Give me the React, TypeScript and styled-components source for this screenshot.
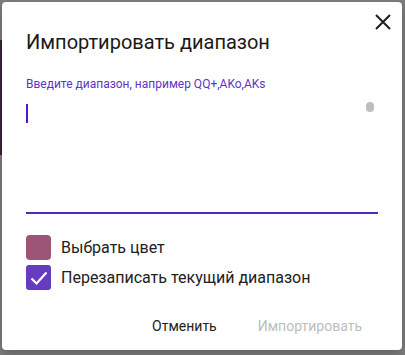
import React from 'react';
import styled, { createGlobalStyle } from 'styled-components';

const GlobalStyle = createGlobalStyle`
  html, body {
    margin: 0;
    padding: 0;
    background: #7f7f7f;
    font-family: Roboto, "Noto Sans", sans-serif;
  }
`;

type Option = {
  label: string;
  checked?: boolean;
  color?: string;
};

const options: Option[] = [
  { label: 'Выбрать цвет', color: '#9c5577' },
  { label: 'Перезаписать текущий диапазон', checked: true },
];

function App() {
  return (
    <>
      <GlobalStyle />
      <Backdrop>
        <SideStrip />
        <Dialog>
          <CloseButton aria-label="close">
            <svg width="16" height="16" viewBox="0 0 16 16">
              <path d="M1 1 L15 15 M15 1 L1 15" stroke="#1f1f1f" strokeWidth="2" />
            </svg>
          </CloseButton>
          <Title>Импортировать диапазон</Title>
          <FieldLabel>Введите диапазон, например QQ+,AKo,AKs</FieldLabel>
          <Field>
            <Caret />
            <Thumb />
          </Field>
          <Options>
            {options.map((o) => (
              <OptionRow key={o.label}>
                {o.color ? (
                  <Swatch $color={o.color} />
                ) : (
                  <CheckBox>
                    {o.checked && (
                      <svg width="20" height="20" viewBox="0 0 20 20">
                        <path
                          d="M2.5 10.5 L7.5 15.5 L17.5 4.5"
                          fill="none"
                          stroke="#fff"
                          strokeWidth="2.2"
                        />
                      </svg>
                    )}
                  </CheckBox>
                )}
                <OptionText>{o.label}</OptionText>
              </OptionRow>
            ))}
          </Options>
          <Actions>
            <TextButton>Отменить</TextButton>
            <TextButton $disabled>Импортировать</TextButton>
          </Actions>
        </Dialog>
      </Backdrop>
    </>
  );
}

export default App;

const Backdrop = styled.div`
  position: relative;
  width: 405px;
  height: 355px;
  padding: 2px 3px 0 2px;
  box-sizing: border-box;
  background: #7f7f7f;
  overflow: hidden;
`;

const SideStrip = styled.div`
  position: absolute;
  left: 0;
  top: 40px;
  width: 3px;
  height: 115px;
  background: #3c2239;
`;

const Dialog = styled.div`
  position: relative;
  width: 400px;
  height: 348px;
  box-sizing: border-box;
  background: #fff;
  border-radius: 4px;
  padding: 24px 24px 0 24px;
  display: flex;
  flex-direction: column;
  box-shadow: 0 4px 12px rgba(0, 0, 0, 0.25);
`;

const CloseButton = styled.button`
  position: absolute;
  top: 9px;
  right: 8px;
  width: 22px;
  height: 22px;
  padding: 0;
  border: none;
  background: none;
  display: flex;
  align-items: center;
  justify-content: center;
`;

const Title = styled.h2`
  margin: 0;
  font-size: 20px;
  line-height: 32px;
  font-weight: 400;
  color: #1a1a1a;
`;

const FieldLabel = styled.div`
  margin-top: 18px;
  font-size: 12px;
  line-height: 16px;
  color: #5e35c4;
`;

const Field = styled.div`
  height: 122px;
  padding: 12px 4px 0 0;
  box-sizing: border-box;
  border-bottom: 2px solid #5228b8;
  display: flex;
  justify-content: space-between;
  align-items: flex-start;
`;

const Caret = styled.div`
  width: 2px;
  height: 19px;
  background: #5015cc;
`;

const Thumb = styled.div`
  width: 8px;
  height: 10px;
  border-radius: 4px;
  background: #bdbdc4;
  margin-top: -2px;
`;

const Options = styled.div`
  margin-top: 21px;
  display: flex;
  flex-direction: column;
  gap: 5px;
`;

const OptionRow = styled.div`
  display: flex;
  align-items: center;
  gap: 10px;
  height: 25px;
`;

const Swatch = styled.div<{ $color: string }>`
  width: 25px;
  height: 25px;
  border-radius: 4px;
  background: ${(p) => p.$color};
`;

const CheckBox = styled.div`
  width: 25px;
  height: 25px;
  border-radius: 3px;
  background: #673bbf;
  display: flex;
  align-items: center;
  justify-content: center;
`;

const OptionText = styled.span`
  font-size: 16px;
  color: #222;
`;

const Actions = styled.div`
  margin-top: 18px;
  display: flex;
  justify-content: flex-end;
  gap: 9px;
`;

const TextButton = styled.button<{ $disabled?: boolean }>`
  height: 36px;
  padding: 0 16px;
  border: none;
  background: none;
  font-family: Roboto, "Noto Sans", sans-serif;
  font-size: 14px;
  color: ${(p) => (p.$disabled ? '#bdbdbd' : '#222')};
`;
